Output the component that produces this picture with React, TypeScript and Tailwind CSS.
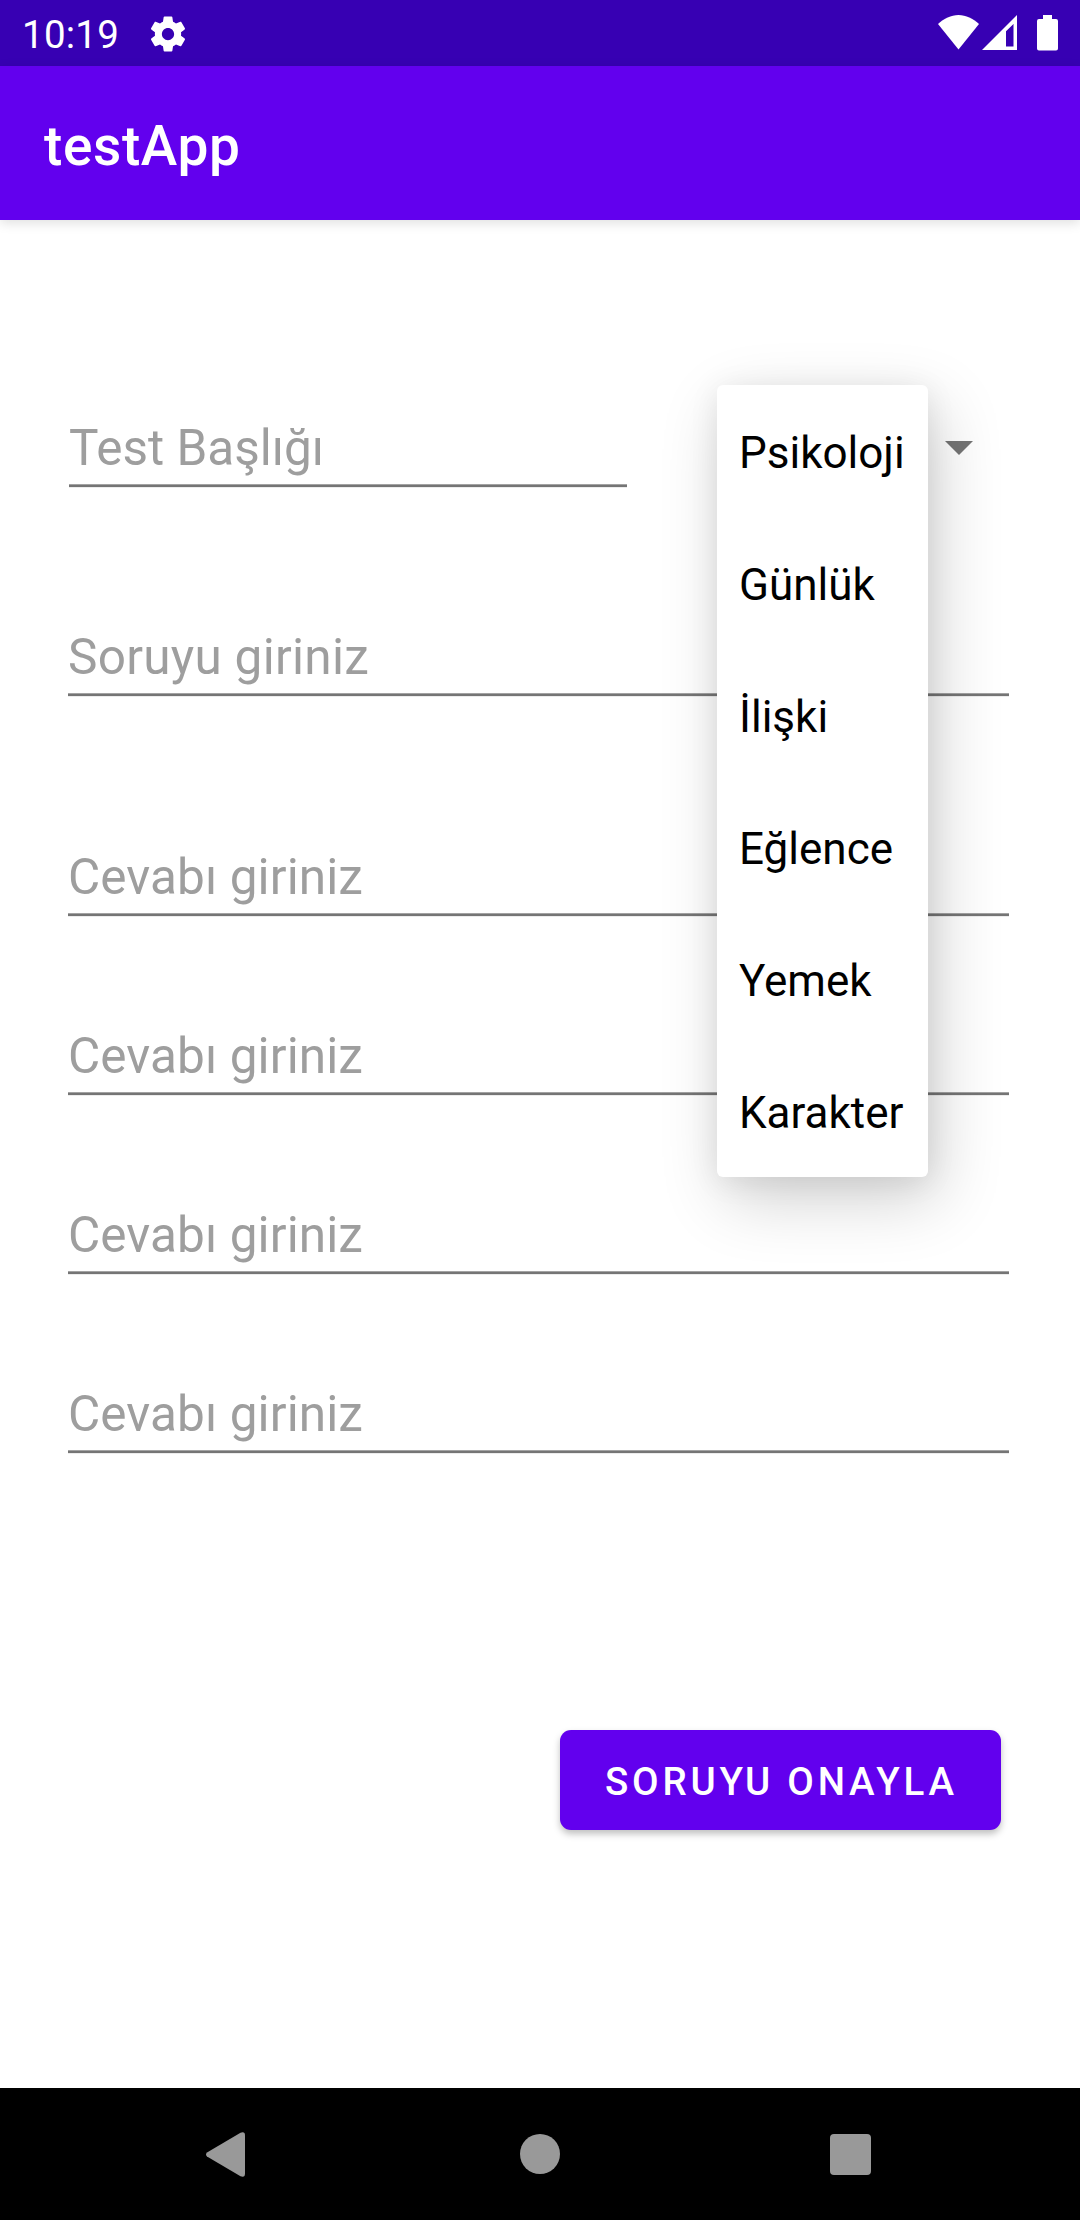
import React from "react";

const answers = ["Cevabı giriniz", "Cevabı giriniz", "Cevabı giriniz", "Cevabı giriniz"];
const categories = ["Psikoloji", "Günlük", "İlişki", "Eğlence", "Yemek", "Karakter"];

function Field({ hint, className = "" }: { hint: string; className?: string }) {
  return (
    <div className={className}>
      <div className="h-[72px] whitespace-nowrap text-[49.5px] leading-[72px] text-[#9e9e9e]">{hint}</div>
      <div className="h-px bg-[#a3a3a3]" />
      <div className="h-0.5 bg-[#757575]" />
      <div className="h-px bg-[#ececec]" />
    </div>
  );
}

function StatusBar() {
  return (
    <header className="flex h-[66px] items-start bg-[#3700b3] pl-[22px] text-white">
      <span className="w-[126px] text-[38.5px] leading-[70px] tracking-[0.25px]">10:19</span>
      <svg className="mt-[13px] -ml-px h-[42px] w-[42px]" viewBox="0 0 24 24" fill="currentColor">
        <path d="M19.43 12.98c.04-.32.07-.64.07-.98s-.03-.66-.07-.98l2.11-1.65c.19-.15.24-.42.12-.64l-2-3.46c-.12-.22-.39-.3-.61-.22l-2.49 1c-.52-.4-1.08-.73-1.69-.98l-.38-2.65C14.46 2.18 14.25 2 14 2h-4c-.25 0-.46.18-.49.42l-.38 2.65c-.61.25-1.17.59-1.69.98l-2.49-1c-.23-.09-.49 0-.61.22l-2 3.46c-.13.22-.07.49.12.64l2.11 1.65c-.04.32-.07.65-.07.98s.03.66.07.98l-2.11 1.65c-.19.15-.24.42-.12.64l2 3.46c.12.22.39.3.61.22l2.49-1c.52.4 1.08.73 1.69.98l.38 2.65c.03.24.24.42.49.42h4c.25 0 .46-.18.49-.42l.38-2.65c.61-.25 1.17-.59 1.69-.98l2.49 1c.23.09.49 0 .61-.22l2-3.46c.12-.22.07-.49-.12-.64l-2.11-1.65zM12 15.5c-1.93 0-3.5-1.57-3.5-3.5s1.57-3.5 3.5-3.5 3.5 1.57 3.5 3.5-1.57 3.5-3.5 3.5z" />
      </svg>
      <div className="ml-auto flex pt-[15px] pr-[22px]">
        <svg className="h-[35px] w-[41px]" viewBox="0 0 41 35" fill="currentColor">
          <path d="M0 9C6 3.500 13 0 20.500 0S35 3.500 41 9L20.500 34.500Z" />
        </svg>
        <svg className="ml-[3px] h-[35px] w-[35px]" viewBox="0 0 35 35" fill="currentColor" fillRule="evenodd">
          <path d="M35 0V35H0ZM31.500 9L24 16.200V31.500H31.500Z" />
        </svg>
        <svg className="ml-5 h-9 w-[21px]" viewBox="0 0 21 36" fill="currentColor">
          <path d="M6 0h9v4h4a2 2 0 0 1 2 2v27.500a2 2 0 0 1-2 2H2a2 2 0 0 1-2-2V6a2 2 0 0 1 2-2h4Z" />
        </svg>
      </div>
    </header>
  );
}

function CategorySpinner() {
  return (
    <div className="relative ml-[90px] flex h-[76px] w-[292px] justify-end pt-[29px] pr-[36px]">
      <svg className="h-[14px] w-[28px]" viewBox="0 0 28 14" fill="#757575">
        <path d="M0 0H28L14 14Z" />
      </svg>
      <ul className="absolute -top-[27px] left-0 z-10 w-[211px] rounded-[6px] bg-white pl-[22px] text-[44px] text-black shadow-[9px_22px_66px_rgba(0,0,0,0.19),0_4px_30px_rgba(0,0,0,0.08)]">
        {categories.map((name) => (
          <li key={name} className="h-[132px] whitespace-nowrap leading-[136px]">{name}</li>
        ))}
      </ul>
    </div>
  );
}

export default function App() {
  return (
    <div className="flex h-[2220px] w-[1080px] flex-col overflow-hidden bg-white font-[Roboto,sans-serif]">
      <StatusBar />
      <div className="relative h-[154px] bg-[#6200ee] pl-[44px] text-[55px] font-medium leading-[160px] tracking-[0.6px] text-white shadow-[0_3px_11px_rgba(0,0,0,0.13)]">
        testApp
      </div>
      <main className="flex flex-1 flex-col pt-[192px] pr-[71px] pl-[68px]">
        <div className="flex pl-px">
          <Field hint="Test Başlığı" className="w-[558px]" />
          <CategorySpinner />
        </div>
        <Field hint="Soruyu giriniz" className="mt-[133px] tracking-[0.27px]" />
        <div className="mt-[144px] flex flex-col gap-[103px]">
          {answers.map((hint, i) => (
            <Field key={i} hint={hint} className="tracking-[0.1px]" />
          ))}
        </div>
        <button className="mt-[276px] mr-2 h-[100px] w-[441px] self-end whitespace-nowrap rounded-[11px] bg-[#6200ee] pl-[45px] text-left text-[38.5px] font-medium leading-[103px] tracking-[3.8px] text-white shadow-[0_4px_7px_rgba(0,0,0,0.25)]">
          SORUYU ONAYLA
        </button>
      </main>
      <nav className="flex h-[132px] items-start bg-black pl-[206px]">
        <svg className="mt-11 h-[45px] w-[39px]" viewBox="0 0 39 45" fill="#999">
          <path d="M1 20.500L34.500 0.700Q39 -1 39 3.500V41.500Q39 46 34.500 44.300L1 24.500Q-1 22.500 1 20.500Z" />
        </svg>
        <div className="mt-[46px] ml-[275px] size-10 rounded-full bg-[#999]" />
        <div className="mt-[46px] ml-[270px] size-[41px] rounded-[4px] bg-[#999]" />
      </nav>
    </div>
  );
}
